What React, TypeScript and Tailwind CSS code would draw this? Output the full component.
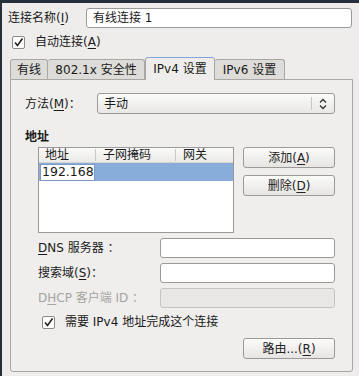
import React from "react";

const font = { fontFamily: '"DejaVu Sans", "Noto Sans CJK SC", sans-serif' };

function U({ c }: { c: string }) {
  return <span className="underline underline-offset-2">{c}</span>;
}

function Check() {
  return (
    <span className="flex h-[13px] w-[13px] items-center justify-center rounded-[2px] border border-[#8a8a8a] bg-white">
      <svg width="11" height="11" viewBox="0 0 11 11">
        <path d="M2 5.5 L4.5 8.5 L9.5 1.5" fill="none" stroke="#222" strokeWidth="1.6" />
      </svg>
    </span>
  );
}

function Btn({ children }: { children: React.ReactNode }) {
  return (
    <div className="flex h-[21px] w-[92px] items-center justify-center rounded-[3px] border border-[#9c9a96] bg-gradient-to-b from-[#fbfbfa] to-[#e6e5e2] text-[12px] text-[#222]">
      {children}
    </div>
  );
}

function Input({ disabled }: { disabled?: boolean }) {
  return (
    <div
      className={
        "h-[20px] w-[175px] rounded-[3px] border " +
        (disabled ? "border-[#c4c3c0] bg-[#e8e7e5]" : "border-[#9a9a9a] bg-white")
      }
    />
  );
}

export default function App() {
  return (
    <div
      className="relative h-[376px] w-[359px] overflow-hidden border-l-2 border-t-[3px] border-[#26303a] bg-[#eeedeb] text-[12px] text-[#1a1a1a]"
      style={font}
    >
      {/* Row 1 */}
      <div className="mt-[5px] flex items-center pl-[6px]">
        <span className="w-[78px]">
          连接名称(<U c="I" />)
        </span>
        <div className="flex h-[20px] w-[266px] items-center rounded-[3px] border border-[#9a9a9a] bg-white pl-[6px]">
          有线连接 1
        </div>
      </div>
      {/* Row 2 */}
      <div className="mt-[5px] flex items-center gap-[10px] pl-[10px]">
        <Check />
        <span>
          自动连接(<U c="A" />)
        </span>
      </div>
      {/* Tabs */}
      <div className="mt-[6px] flex items-end pl-[8px]">
        <div className="flex h-[20px] w-[38px] items-center justify-center rounded-t-[3px] border border-b-0 border-[#a8a7a3] bg-[#dddcd8]">
          有线
        </div>
        <div className="flex h-[20px] w-[97px] items-center justify-center rounded-t-[3px] border border-b-0 border-l-0 border-[#a8a7a3] bg-[#dddcd8]">
          802.1x 安全性
        </div>
        <div className="relative z-10 -mb-px flex h-[23px] w-[70px] items-center justify-center rounded-t-[3px] border border-b-0 border-[#a8a7a3] border-t-[#7fa6d6] bg-[#eeedeb]">
          IPv4 设置
        </div>
        <div className="flex h-[20px] w-[70px] items-center justify-center rounded-t-[3px] border border-b-0 border-l-0 border-[#a8a7a3] bg-[#dddcd8]">
          IPv6 设置
        </div>
      </div>
      {/* Panel */}
      <div className="ml-[8px] h-[293px] w-[343px] rounded-b-[3px] border border-[#a8a7a3] bg-[#efeeec]">
        {/* Method */}
        <div className="mt-[13px] flex items-center pl-[14px]">
          <span className="w-[72px]">
            方法(<U c="M" />)：
          </span>
          <div className="flex h-[21px] w-[238px] items-center rounded-[3px] border border-[#9c9a96] bg-gradient-to-b from-[#fbfbfa] to-[#e8e7e4]">
            <span className="flex-1 pl-[6px]">手动</span>
            <div className="h-[13px] w-px bg-[#c8c6c2]" />
            <svg width="22" height="14" viewBox="0 0 22 14">
              <path d="M8 5.5 L11 2.5 L14 5.5 M8 8.5 L11 11.5 L14 8.5" fill="none" stroke="#333" strokeWidth="1.3" />
            </svg>
          </div>
        </div>
        {/* Address label */}
        <div className="mt-[14px] pl-[14px] font-bold">地址</div>
        {/* Table + buttons */}
        <div className="mt-[1px] flex pl-[27px]">
          <div className="h-[86px] w-[196px] border border-[#9a9a9a] bg-white">
            <div className="flex h-[15px] items-center border-b border-[#d6d5d2] bg-gradient-to-b from-[#fafaf9] to-[#ebeae7] text-[12px]">
              <span className="w-[57px] border-r border-[#c9c8c4] pl-[6px] leading-[12px]">地址</span>
              <span className="w-[80px] border-r border-[#c9c8c4] pl-[7px] leading-[12px]">子网掩码</span>
              <span className="pl-[7px] leading-[12px]">网关</span>
            </div>
            <div className="flex h-[18px] items-center bg-[#88addb]">
              <div className="ml-[1px] flex h-[17px] w-[55px] items-center border border-[#7b9bc4] bg-white pl-[1px] text-[12.5px]">
                192.168<span className="ml-px h-[13px] w-px bg-black" />
              </div>
            </div>
          </div>
          <div className="ml-[9px] flex flex-col gap-[7px]">
            <Btn>
              添加(<U c="A" />)
            </Btn>
            <Btn>
              删除(<U c="D" />)
            </Btn>
          </div>
        </div>
        {/* Fields */}
        <div className="mt-[5px] flex flex-col gap-[5px] pl-[27px]">
          <div className="flex items-center">
            <span className="w-[122px]">
              <U c="D" />
              NS 服务器 ：
            </span>
            <Input />
          </div>
          <div className="flex items-center">
            <span className="w-[122px]">
              搜索域(<U c="S" />)：
            </span>
            <Input />
          </div>
          <div className="flex items-center text-[#a5a4a1]">
            <span className="w-[122px]">
              D<U c="H" />
              CP 客户端 ID ：
            </span>
            <Input disabled />
          </div>
        </div>
        {/* Require checkbox */}
        <div className="mt-[5px] flex items-center gap-[10px] pl-[31px]">
          <Check />
          <span>需要 IPv4 地址完成这个连接</span>
        </div>
        {/* Routes */}
        <div className="mt-[7px] flex justify-end pr-[17px]">
          <Btn>
            路由...(<U c="R" />)
          </Btn>
        </div>
      </div>
    </div>
  );
}
